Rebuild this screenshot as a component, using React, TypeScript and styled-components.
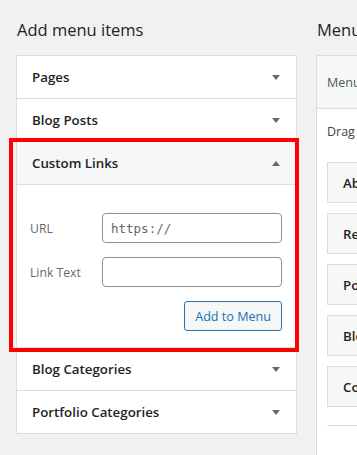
import React from "react";
import styled, { createGlobalStyle } from "styled-components";

const GlobalStyle = createGlobalStyle`
  html, body {
    margin: 0;
    padding: 0;
    overflow: hidden;
    background: #f1f1f1;
    font-family: "Open Sans", "Noto Sans", sans-serif;
    color: #1d2327;
  }
`;

const Page = styled.div`
  position: relative;
  display: flex;
  gap: 19px;
  padding-left: 16px;
  width: 800px;
`;

const Column = styled.div<{ $width: number }>`
  flex: 0 0 ${(p) => p.$width}px;
  width: ${(p) => p.$width}px;
  min-width: 0;
  display: flex;
  flex-direction: column;
`;

const Title = styled.h2`
  margin: 0;
  height: 55px;
  padding: 18px 0 0 1px;
  box-sizing: border-box;
  font-size: 16.5px;
  font-weight: 400;
  line-height: 24px;
  color: #1d2327;
  white-space: nowrap;
`;

const Panel = styled.div<{ $open?: boolean }>`
  background: #fff;
  border: 1px solid #dcdcde;
  ${(p) => (p.$open ? "border-bottom: none; min-height: 400px;" : "")}
`;

const RowHeader = styled.div<{ $open?: boolean }>`
  display: flex;
  align-items: center;
  justify-content: space-between;
  height: 42px;
  padding: 0 16px 0 15px;
  background: ${(p) => (p.$open ? "#f6f7f7" : "#fff")};
  border-bottom: 1px solid #dcdcde;
  font-size: 13.3px;
  font-weight: 600;
  color: #1d2327;

  &:last-child {
    border-bottom: none;
  }
`;

const Arrow = styled.span<{ $up?: boolean }>`
  width: 0;
  height: 0;
  border-left: 4px solid transparent;
  border-right: 4px solid transparent;
  ${(p) =>
    p.$up
      ? "border-bottom: 5px solid #646970;"
      : "border-top: 5px solid #646970;"}
`;

const Body = styled.div`
  display: flex;
  flex-direction: column;
  gap: 14px;
  height: 163px;
  box-sizing: border-box;
  padding: 28px 14px 0 13px;
  border-bottom: 1px solid #dcdcde;
`;

const Field = styled.label`
  display: flex;
  align-items: center;
`;

const Label = styled.span`
  flex: 0 0 72px;
  font-size: 12.2px;
  color: #646970;
`;

const Input = styled.input`
  flex: 1;
  width: 0;
  min-width: 0;
  height: 30px;
  box-sizing: border-box;
  border: 1px solid #8c8f94;
  border-radius: 4px;
  padding: 0 8px;
  font-family: "DejaVu Sans Mono", "Liberation Mono", monospace;
  font-size: 12.5px;
  color: #2c3338;
  background: #fff;

  &::placeholder {
    color: #646970;
  }
`;

const Actions = styled.div`
  display: flex;
  justify-content: flex-end;
`;

const Button = styled.button`
  height: 30px;
  padding: 0 10px;
  border: 1px solid #2271b1;
  border-radius: 3px;
  background: #f6f7f7;
  color: #2271b1;
  font-family: "Open Sans", "Noto Sans", sans-serif;
  font-size: 12.6px;
`;

const StructureHead = styled.div`
  display: flex;
  align-items: center;
  height: 52px;
  padding-left: 10px;
  background: #f6f7f7;
  border-bottom: 1px solid #dcdcde;
  font-size: 12.5px;
  color: #50575e;
  white-space: nowrap;
`;

const StructureBody = styled.div`
  padding: 13px 10px 0 10px;
`;

const Hint = styled.p`
  margin: 0 0 20px;
  font-size: 12.5px;
  line-height: 20px;
  color: #3c434a;
  white-space: nowrap;
`;

const MenuItem = styled.div`
  display: flex;
  align-items: center;
  height: 39px;
  margin-bottom: 10px;
  padding-left: 15px;
  background: #f6f7f7;
  border: 1px solid #dcdcde;
  font-size: 13.3px;
  font-weight: 600;
  color: #1d2327;
  white-space: nowrap;
`;

const Divider = styled.div`
  margin-top: 18px;
  height: 1px;
  background: #dcdcde;
`;

const Highlight = styled.div`
  position: absolute;
  left: 9px;
  top: 138px;
  width: 290px;
  height: 214px;
  box-sizing: border-box;
  border: 4px solid #ff0000;
  pointer-events: none;
`;

const sections = ["Pages", "Blog Posts"];
const after = ["Blog Categories", "Portfolio Categories"];
const menuItems = ["About", "Reviews", "Portfolio", "Blog", "Contact"];

export default function App() {
  return (
    <>
      <GlobalStyle />
      <Page>
        <Column $width={281}>
          <Title>Add menu items</Title>
          <Panel>
            {sections.map((s) => (
              <RowHeader key={s}>
                {s}
                <Arrow />
              </RowHeader>
            ))}
            <RowHeader $open>
              Custom Links
              <Arrow $up />
            </RowHeader>
            <Body>
              <Field>
                <Label>URL</Label>
                <Input placeholder="https://" />
              </Field>
              <Field>
                <Label>Link Text</Label>
                <Input />
              </Field>
              <Actions>
                <Button>Add to Menu</Button>
              </Actions>
            </Body>
            {after.map((s) => (
              <RowHeader key={s}>
                {s}
                <Arrow />
              </RowHeader>
            ))}
          </Panel>
        </Column>
        <Column $width={460}>
          <Title>Menu structure</Title>
          <Panel $open>
            <StructureHead>Menu Name</StructureHead>
            <StructureBody>
              <Hint>Drag the items into the order you prefer.</Hint>
              {menuItems.map((m) => (
                <MenuItem key={m}>{m}</MenuItem>
              ))}
              <Divider />
            </StructureBody>
          </Panel>
        </Column>
        <Highlight />
      </Page>
    </>
  );
}
